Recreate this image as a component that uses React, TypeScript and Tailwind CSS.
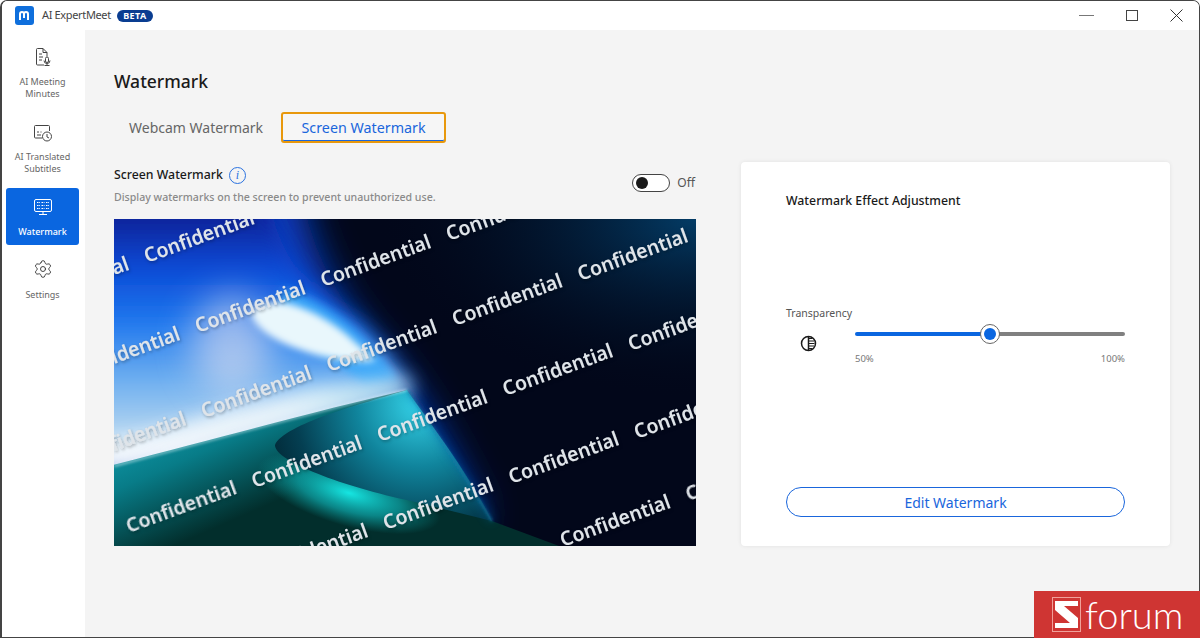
import { Settings } from "lucide-react";

const marks: [number, number][] = [
  [-93.5, 88], [32, 42], [157.5, -4],
  [-42.5, 158], [83, 112], [208.5, 66], [334, 20],
  [-36.5, 243], [89, 197], [214.5, 151], [340, 105], [465.5, 60],
  [14, 312], [139.5, 267], [265, 221], [390.5, 175], [516, 130],
  [145.5, 355], [271, 309], [396.5, 263], [522, 218],
  [448, 326], [573.5, 280],
];

const Wallpaper = () => (
  <svg viewBox="0 0 582 327" className="block w-[582px] h-[327px]">
    <defs>
      <linearGradient id="sky" gradientUnits="userSpaceOnUse" x1="0" y1="0" x2="0" y2="246">
        <stop offset="0" stopColor="#08239a" />
        <stop offset="0.2" stopColor="#0b4ad6" />
        <stop offset="0.42" stopColor="#1f78ee" />
        <stop offset="0.66" stopColor="#6fb0f0" />
        <stop offset="0.84" stopColor="#a9cff0" />
        <stop offset="0.97" stopColor="#eef8fb" />
      </linearGradient>
      <linearGradient id="sea" gradientUnits="userSpaceOnUse" x1="0" y1="190" x2="60" y2="327">
        <stop offset="0" stopColor="#13a9bc" />
        <stop offset="0.5" stopColor="#087c88" />
        <stop offset="1" stopColor="#022e2c" />
      </linearGradient>
      <linearGradient id="band" gradientUnits="userSpaceOnUse" x1="0" y1="240" x2="290" y2="170">
        <stop offset="0" stopColor="#ffffff" />
        <stop offset="0.6" stopColor="#f2fafc" />
        <stop offset="1" stopColor="#bfe9f0" />
      </linearGradient>
      <radialGradient id="fold" gradientUnits="userSpaceOnUse" cx="305" cy="185" r="165">
        <stop offset="0" stopColor="#35d4ea" />
        <stop offset="0.38" stopColor="#10849c" />
        <stop offset="0.75" stopColor="#043f52" />
        <stop offset="1" stopColor="#012330" />
      </radialGradient>
      <radialGradient id="corner" cx="1" cy="0" r="0.55">
        <stop offset="0" stopColor="#033c66" />
        <stop offset="1" stopColor="#020818" stopOpacity="0" />
      </radialGradient>
      <radialGradient id="cyan" cx="0.5" cy="0.5" r="0.5">
        <stop offset="0" stopColor="#16e6e2" />
        <stop offset="0.55" stopColor="#10c0c4" stopOpacity="0.6" />
        <stop offset="1" stopColor="#0cb0b0" stopOpacity="0" />
      </radialGradient>
      <filter id="b2" x="-30%" y="-30%" width="160%" height="160%"><feGaussianBlur stdDeviation="1.500" /></filter>
      <filter id="b4" x="-30%" y="-30%" width="160%" height="160%"><feGaussianBlur stdDeviation="3.500" /></filter>
      <filter id="b6" x="-30%" y="-30%" width="160%" height="160%"><feGaussianBlur stdDeviation="5" /></filter>
      <filter id="b10" x="-30%" y="-30%" width="160%" height="160%"><feGaussianBlur stdDeviation="10" /></filter>
      <filter id="b14" x="-60%" y="-60%" width="220%" height="220%"><feGaussianBlur stdDeviation="18" /></filter>
      <filter id="shade" x="-10%" y="-10%" width="120%" height="120%"><feDropShadow dx="1" dy="1.500" stdDeviation="1.500" floodColor="#000" floodOpacity="0.3" /></filter>
      <clipPath id="pic"><rect width="582" height="327" /></clipPath>
    </defs>
    <g clipPath="url(#pic)">
      <rect width="582" height="327" fill="#02071a" />
      <rect width="582" height="327" fill="url(#corner)" />
      <path d="M-40 -40 L185 -40 C195 30 225 85 272 135 C300 165 340 235 370 300 L300 340 L-40 340 Z" fill="#0a3cc0" filter="url(#b14)" />
      <path d="M-30 -30 L155 -30 C160 30 190 70 240 100 C262 118 285 150 293 172 L0 250 L-30 255 Z" fill="url(#sky)" filter="url(#b10)" />
      <path d="M170 70 C205 80 245 105 283 160 L250 165 L160 100 Z" fill="#3aa6f8" filter="url(#b6)" />
      <ellipse cx="118" cy="125" rx="40" ry="50" fill="#efe6ee" opacity="0.55" filter="url(#b14)" />
      <path d="M137 94 C150 72 195 85 232 115 L262 142 C215 146 142 122 137 94 Z" fill="#e9f7fc" filter="url(#b4)" />
      <path d="M-10 232 L110 192 L200 168 L296 160 L296 176 L60 246 L-10 250 Z" fill="url(#band)" opacity="0.9" filter="url(#b10)" />
      <path d="M-5 247 C120 215 210 190 293 171 C320 210 350 255 378 302 L480 340 L-5 340 Z" fill="url(#sea)" />
      <ellipse cx="235" cy="274" rx="95" ry="33" fill="url(#cyan)" transform="rotate(16 235 274)" />
      <path d="M293 171 C250 184 170 205 161 226 C160 242 230 268 297 282 L378 302 C355 255 320 210 293 171 Z" fill="url(#fold)" />
      <path d="M293 171 C320 210 350 255 378 302" fill="none" stroke="#0b64a8" strokeWidth="4" opacity="0.6" filter="url(#b6)" />
      <path d="M293 171 C320 210 350 255 378 302" fill="none" stroke="#1478a8" strokeWidth="1.500" filter="url(#b2)" />
      <path d="M0 247 C120 215 210 190 293 171" fill="none" stroke="#f2fcff" strokeWidth="1.500" opacity="0.8" filter="url(#b2)" />
      <g filter="url(#shade)">
        {marks.map(([x, y], i) => (
          <text
            key={i}
            transform={`translate(${x + 1} ${y + 2}) rotate(-20)`}
            fill="#dfe4e9"
            fontSize="20"
            fontWeight="600"
            textLength="116"
            lengthAdjust="spacingAndGlyphs"
          >
            Confidential
          </text>
        ))}
      </g>
    </g>
  </svg>
);

const MinutesIcon = () => (
  <svg width="20" height="20" viewBox="0 0 20 20" fill="none" stroke="#444" strokeWidth="1">
    <path d="M11 18H4.500a1 1 0 0 1-1-1V2.500a1 1 0 0 1 1-1H10l4 4v4" />
    <path d="M10 1.500V5.500h4M6 7h3M6 10h4M6 13h3" />
    <rect x="12.500" y="10" width="3" height="5.500" rx="1.500" />
    <path d="M11 13.500a3 3 0 0 0 6 0M14 16.500V18.500M11.500 18.500h5" />
  </svg>
);

const SubtitlesIcon = () => (
  <svg width="20" height="20" viewBox="0 0 20 20" fill="none" stroke="#444" strokeWidth="1">
    <path d="M9 15H2.500a1 1 0 0 1-1-1V3.500a1 1 0 0 1 1-1h13a1 1 0 0 1 1 1V8" />
    <path d="M4 9h2M7.500 9h1M4 12h4" />
    <circle cx="14" cy="13.500" r="4.500" />
    <path d="M14 11v3l2 1" />
  </svg>
);

const ScreenIcon = () => (
  <svg width="20" height="20" viewBox="0 0 20 20" fill="none" stroke="#fff" strokeWidth="1">
    <rect x="1.500" y="2.500" width="17" height="12" rx="1.500" />
    <path d="M10 14.500V17.500M6 17.500h8" />
    <path d="M4 5.500h3M8.500 5.500h3M13 5.500h3M4 8.500h3M8.500 8.500h3M13 8.500h3M4 11.500h3M8.500 11.500h3M13 11.500h3" strokeDasharray="1.500 0.700" />
  </svg>
);

const navItems = [
  { label: ["AI Meeting", "Minutes"], icon: <MinutesIcon />, box: "h-[76px]", gap: "gap-[9px]" },
  { label: ["AI Translated", "Subtitles"], icon: <SubtitlesIcon />, box: "h-[74px]", gap: "gap-[8px]" },
  { label: ["Watermark"], icon: <ScreenIcon />, box: "h-[57px] bg-[#0a66e0] rounded-[3px] text-white font-medium", gap: "gap-[9px]" },
  { label: ["Settings"], icon: <Settings size={20} strokeWidth={1.1} color="#333" />, box: "h-[57px] mt-[5px]", gap: "gap-[10px]" },
];

const App = () => {
  return (
    <div className="relative w-[1200px] h-[638px] overflow-hidden bg-white font-['Noto_Sans',sans-serif] text-[#1a1a1a]">
      <div className="w-full h-full flex flex-col border border-[#444] border-l-2 rounded-t-[7px] overflow-hidden">
        {/* Title bar */}
        <div className="h-[29px] shrink-0 flex items-center bg-white">
          <div className="ml-[13px] w-[19px] h-[19px] rounded-[3px] bg-[#0f6fdc] flex items-center justify-center">
            <svg width="13" height="13" viewBox="0 0 13 13" fill="none" stroke="#fff" strokeWidth="2">
              <path d="M2 11V5a2 2 0 0 1 4 0v4M6 5a2 2 0 0 1 4 0v6" />
            </svg>
          </div>
          <span className="ml-[8px] text-[11px] tracking-[-0.35px] text-[#444]">AI ExpertMeet</span>
          <span className="ml-[6px] w-[36px] h-[12px] rounded-full bg-[#0a3d91] text-white text-[9px] leading-[12px] font-bold text-center tracking-[0.4px]">BETA</span>
          <div className="ml-auto flex items-center">
            <div className="w-[15px] h-[1.500px] bg-[#777] mr-[32px]" />
            <div className="w-[12px] h-[11px] border border-[#444] mr-[32px]" />
            <svg width="13" height="13" viewBox="0 0 13 13" className="mr-[16px]" stroke="#333" strokeWidth="1">
              <path d="M0.500 0.500L12.500 12.500M12.500 0.500L0.500 12.500" />
            </svg>
          </div>
        </div>

        <div className="flex-1 flex min-h-0">
          {/* Sidebar */}
          <div className="w-[83px] shrink-0 bg-white flex flex-col pl-[4px] pr-[6px] pt-[8px]">
            {navItems.map((item) => (
              <div key={item.label[0]} className={`flex flex-col items-center pt-[9px] ${item.gap} ${item.box}`}>
                {item.icon}
                <div className="text-[9px] leading-[12px] text-center">
                  {item.label.map((l) => (
                    <div key={l} className={item.label[0] === "Watermark" ? "text-white" : "text-[#666]"}>{l}</div>
                  ))}
                </div>
              </div>
            ))}
          </div>

          {/* Content */}
          <div className="flex-1 bg-[#f4f4f4] pl-[29px] pt-[39px] flex flex-col">
            <h1 className="text-[17.500px] leading-[24px] font-medium text-[#1a1a1a]">Watermark</h1>
            <div className="mt-[19px] flex items-center h-[31px]">
              <span className="ml-[15px] text-[14px] text-[#666]">Webcam Watermark</span>
              <div className="ml-[18px] w-[165px] h-[31px] rounded-[3px] border-2 border-[#e8980c] bg-[#f6f6f6] text-[14.300px] text-[#1a66dc] flex items-center justify-center shadow-[inset_0_-1px_0_#1a66dc]">
                Screen Watermark
              </div>
            </div>

            <div className="mt-[19px] flex">
              <div className="w-[582px]">
                <div className="flex items-start justify-between h-[57px]">
                  <div className="pt-[2px]">
                    <div className="flex items-center h-[22px]">
                      <span className="text-[12.300px] font-medium">Screen Watermark</span>
                      <span className="ml-[6px] w-[17px] h-[17px] rounded-full border border-[#2a72e0] text-[#2a72e0] text-[12px] leading-[15px] text-center italic font-['Liberation_Serif',serif]">i</span>
                    </div>
                    <p className="mt-[4px] text-[10.600px] font-medium leading-[14px] text-[#8a8a8a]">Display watermarks on the screen to prevent unauthorized use.</p>
                  </div>
                  <div className="flex items-center mt-[12px] pr-[1px]">
                    <div className="w-[38px] h-[18px] rounded-full border-[1.500px] border-[#444] bg-white flex items-center pl-[3px]">
                      <div className="w-[12px] h-[12px] rounded-full bg-[#1a1a1a]" />
                    </div>
                    <span className="ml-[7px] text-[12px] text-[#555]">Off</span>
                  </div>
                </div>
                <Wallpaper />
              </div>

              {/* Adjustment card */}
              <div className="ml-[45px] w-[429px] h-[384px] bg-white rounded-[4px] shadow-[0_0_4px_rgba(0,0,0,0.08)] px-[45px] pt-[30px] flex flex-col">
                <div className="text-[12.300px] leading-[18px] font-medium">Watermark Effect Adjustment</div>
                <div className="mt-[95px] text-[10.500px] leading-[16px] text-[#555]">Transparency</div>
                <div className="mt-[3px] flex">
                  <div className="w-[69px] pt-[11px] pl-[14px]">
                    <svg width="17" height="17" viewBox="0 0 17 17" fill="none" stroke="#1a1a1a">
                      <circle cx="8.500" cy="8.500" r="7" strokeWidth="1.500" />
                      <path d="M8.500 1.500V15.500" strokeWidth="1.500" />
                      <path d="M9 3.500h3.500M9 6h5M9 8.500h5.500M9 11h5M9 13.500h3.500" strokeWidth="1" />
                    </svg>
                  </div>
                  <div className="flex-1">
                    <div className="relative h-[20px] flex items-center">
                      <div className="w-[135px] h-[4px] rounded-l-full bg-[#0a66e0]" />
                      <div className="flex-1 h-[4px] rounded-r-full bg-[#808080]" />
                      <div className="absolute left-[125px] top-0 w-[20px] h-[20px] rounded-full bg-white border border-[#666] flex items-center justify-center">
                        <div className="w-[12px] h-[12px] rounded-full bg-[#0a66e0]" />
                      </div>
                    </div>
                    <div className="mt-[9px] flex justify-between text-[9.500px] leading-[12px] text-[#777]">
                      <span>50%</span>
                      <span>100%</span>
                    </div>
                  </div>
                </div>
                <div className="mt-[122px] h-[30px] rounded-full border border-[#1a66dc] text-[14px] text-[#1a66dc] flex items-center justify-center">
                  Edit Watermark
                </div>
              </div>
            </div>
          </div>
        </div>
      </div>

      {/* Forum badge */}
      <div className="absolute right-0 bottom-0 w-[166px] h-[47px] bg-[#cf3533] flex items-center pl-[18px]">
        <div className="w-[29px] h-[35px] border border-[#f0a09a] flex items-center justify-center">
          <svg width="23" height="27" viewBox="0 0 23 27" fill="#fff">
            <path d="M0 0H23V5H9L23 17V27H0V22H15L0 9Z" />
          </svg>
        </div>
        <span className="ml-[4px] text-[38px] leading-[47px] font-light text-white font-['Lato',sans-serif]">forum</span>
      </div>
    </div>
  );
};

export default App;
